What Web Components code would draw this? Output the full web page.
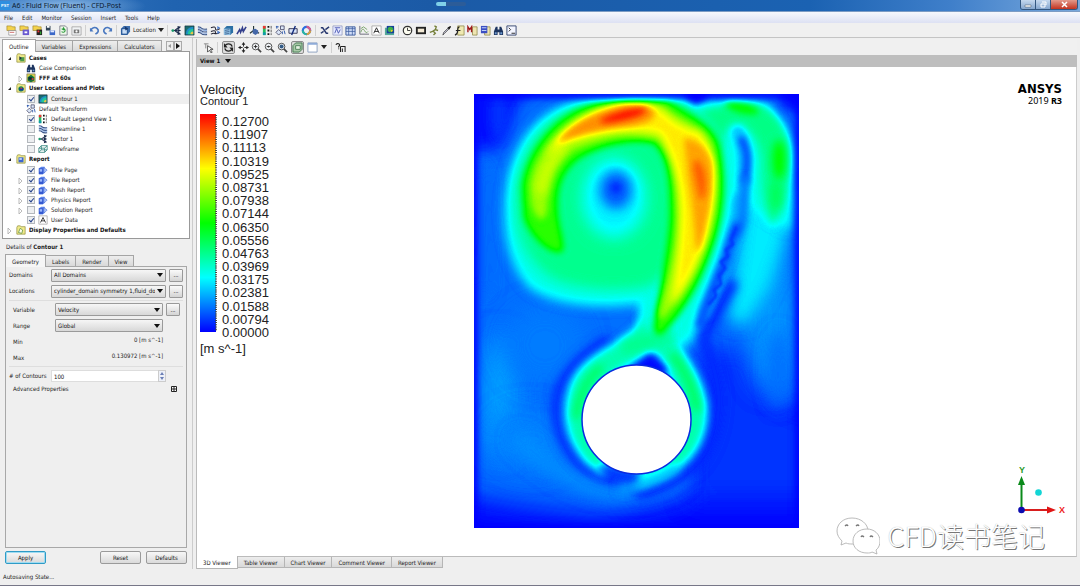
<!DOCTYPE html>
<html lang="en">
<head>
<meta charset="utf-8">
<title>A6 : Fluid Flow (Fluent) - CFD-Post</title>
<style>
html,body{height:100%;margin:0}
body{font:6px/10px "DejaVu Sans Condensed","Noto Sans",sans-serif;color:#222;background:#efefef;overflow:hidden}
</style>
</head>
<body>
<cfd-app></cfd-app>
<script>
const define = (name, html, setup) => customElements.define(name, class extends HTMLElement {
  constructor() {
    super();
    this.attachShadow({mode: 'open'}).innerHTML = '<style>*{box-sizing:border-box}:host{box-sizing:border-box}:host([hidden]){display:none}</style>' + html;
  }
  connectedCallback() { if (setup) setup(this, this.shadowRoot); }
});

/* 12 x 12 glyphs shared by the toolbars and the outline tree */
const folder = c => `<path d="M1 3V11H11V2H6L5 1H2Z" fill="#f1ea8a" stroke="#8b8a3a" stroke-width=".8"/>${c}`;
const pair = c => `<path d="M1 1h5l1 1h3v4H1z" fill="#f3d24d" stroke="#a0852a" stroke-width=".7"/>${c}`;
const waves = '<path d="M1 2q3 0 4 1.500t6 1M1 5q3 0 4 1.500t6 1M1 8q3 0 4 1.500t6 1" fill="none" stroke="#3a5488" stroke-width="1.300"/><path d="M1 3.500q3 0 4 1.500t6 1M1 6.500q3 0 4 1.500t6 1" fill="none" stroke="#6f9be0" stroke-width=".8"/>';
const binoc = '<path d="M3 2h2v3h2V2h2l2 5v4H7V8H5v3H1V7z" fill="#1d3560"/><path d="M2 8h2v2H2zM8 8h2v2H8z" fill="#6f9ad0"/>';
const vec = '<path d="M1 6h6M4 6l4-3M4 6l4 3" stroke="#1b2b4c" stroke-width="1.100" fill="none"/><path d="M7 1l4 1-3 3zM7 4l4 2-4 2zM8 7l3 3-4 1z" fill="#1b2b4c"/><circle cx="2" cy="6" r="1.500" fill="#1a9a6a"/>';
const page = '<path d="M1 4l3-2h4v7l-2 2H1z" fill="#5b83ea"/><path d="M1 4h5v7H1z" fill="#3358d0"/><path d="M2 5h3v3H2z" fill="#9db8fa"/><path d="M7 3l4 3-4 4z" fill="#aac3f7" stroke="#3358d0" stroke-width=".6"/>';
const mag = c => `<circle cx="5" cy="5" r="3.600" fill="#f6f9fc" stroke="#444" stroke-width="1"/><path d="M7.500 7.500L11 11" stroke="#444" stroke-width="1.800"/>${c}`;
const contour = '<path d="M1 1h10v10H1z" fill="#1c6a6c" stroke="#123" stroke-width=".6"/><path d="M2 10q0-7 8-8v8z" fill="#1f8fc8"/><path d="M4 10q0-5 6-6v6z" fill="#22c79a"/><path d="M7 10q0-3 3-3v3z" fill="#e9c545"/>';
const ICONS = {
  load: pair('<path d="M3 6h8v5H3z" fill="#fff" stroke="#777" stroke-width=".6"/><path d="M4 8h5" stroke="#c66"/>'),
  state: pair('<path d="M4 5h7v6H4z" fill="#6a5ad0"/><path d="M6 7h3v2H6z" fill="#fff"/>'),
  results: pair('<path d="M5 5h6v6H5z" fill="#222"/><path d="M6 6h2v2H6z" fill="#e33"/><path d="M9 7h1v3H9z" fill="#3c3"/>'),
  save: '<path d="M1 1h5v5H1z" fill="#345"/><path d="M2 1h3v2H2z" fill="#fff"/><path d="M5 6h6v5H5z" fill="#3b68c8"/><path d="M6 6h4v2H6z" fill="#dfe8ff"/>',
  refresh: '<path d="M2 1h6l2 2v8H2z" fill="#eef8ea" stroke="#667" stroke-width=".8"/><path d="M4 7a2 2 0 1 0 2-3M6 2.500V5L4 4" fill="none" stroke="#2b9a3b" stroke-width="1.200"/>',
  camera: '<path d="M1 2h10v9H1z" fill="#f1f3f5" stroke="#999" stroke-width=".8"/><path d="M3 5h6v4H3z" fill="#777"/><circle cx="6" cy="7" r="1.200" fill="#fff"/>',
  undo: '<path d="M2 5q4-4 7-1t-2 6" fill="none" stroke="#4a78c0" stroke-width="1.800"/><path d="M1 3l4 4H1z" fill="#4a78c0"/>',
  redo: '<path d="M10 5Q6 1 3 4t2 6" fill="none" stroke="#4a78c0" stroke-width="1.800"/><path d="M11 3L7 7h4z" fill="#4a78c0"/>',
  location: '<path d="M1 4l3-3h7v6l-3 4H1z" fill="#3f6fae"/><path d="M2 4h6v6H2z" fill="#c7dcf5" stroke="#174a8c" stroke-width="1"/><path d="M5 1l4 3-3 2z" fill="#17386e"/>',
  vector: vec, contour, waves,
  track: '<path d="M1 3q5-2 5 1t5 0M1 7q5-2 5 1t5 0M1 10q4-2 5 0" fill="none" stroke="#223" stroke-width="1.100"/><path d="M8 1l3 2-3 2zM8 6l3 2-3 2z" fill="#47c"/>',
  volume: '<path d="M1 4l3-3h7v7l-3 3H1z" fill="#2b6fa4"/><path d="M1 4h7v7H1z" fill="#8fbfe2"/><path d="M2 6l5-1M2 8l5-1M2 10l5-1" stroke="#3a5a88" stroke-width=".8"/>',
  text3d: '<path d="M1 10l3-5 1 3 2-5 1 4 3-5" fill="none" stroke="#333f8c" stroke-width="1.700"/>',
  instance: '<path d="M5 1v5L1 9M6 6l5 3" fill="none" stroke="#233" stroke-width="1.200"/><path d="M4 5l3-1 3 2v3l-3 2-3-2z" fill="#4467a8"/>',
  legend: '<path d="M1 1h3v10H1z" fill="#22c060"/><path d="M1 1h3v3H1z" fill="#e33"/><path d="M1 8h3v3H1z" fill="#19a"/><path d="M6 1h2v2H6zM6 5h2v2H6zM6 9h2v2H6z" fill="#111"/><path d="M10 1v3M10 5v3M10 9v2" stroke="#555"/>',
  transform: '<path d="M1 8l3-3 3 3-3 3z" fill="#dbe6f8" stroke="#335" stroke-width=".8"/><path d="M6 1h4v4H6z" fill="#dbe6f8" stroke="#335" stroke-width=".8"/><path d="M2 1v3M1 2h3M8 7v3M10 6l1 4" stroke="#2350a8"/>',
  clip: '<path d="M1 4h9v5H1z" fill="#d8e4fa" stroke="#224" stroke-width=".9"/><path d="M4 11L8 1" stroke="#112a7a" stroke-width="1.500"/>',
  wheel: '<circle cx="6" cy="6" r="4" fill="none" stroke="#2a6fe0" stroke-width="2.400"/><path d="M6 2a4 4 0 0 1 4 4" fill="none" stroke="#d65a8c" stroke-width="2.400"/><path d="M10 6a4 4 0 0 1-4 4" fill="none" stroke="#d9a03a" stroke-width="2.400"/><path d="M6 10a4 4 0 0 1-4-4" fill="none" stroke="#28b8a0" stroke-width="2.400"/>',
  vars: '<path d="M2 3h2l4 6h2M2 9l3-2M7 5l4-3" fill="none" stroke="#2a3a70" stroke-width="1.600"/>',
  expr: '<path d="M1 1h10v10H1z" fill="#e8ecff" stroke="#8d96bd" stroke-width=".8"/><path d="M3 3h6M3 9l2-5 2 5 2-4" fill="none" stroke="#4a56b4"/>',
  table: '<path d="M1 2h10v9H1z" fill="#cfdcf8" stroke="#3a5a9c"/><path d="M1 4h10M1 7h10M4 2v9M8 2v9" stroke="#3a5a9c" stroke-width=".8"/>',
  chart: '<path d="M2 1v9h10" fill="none" stroke="#667"/><path d="M3 8q2-6 4-2t4 1M3 4l3-2 4 3" fill="none" stroke="#6a9a5a" stroke-width=".9"/>',
  letter: '<path d="M1 1h10v10H1z" fill="#fff" stroke="#999" stroke-width=".8"/><path d="M3 9l3-6 3 6M4 7h4" fill="none" stroke="#222"/>',
  figure: '<path d="M1 3h10v8H1z" fill="#5a9"/><path d="M3 1h8v8H3z" fill="#16419a"/><circle cx="7" cy="5" r="3" fill="#3cb04a"/><path d="M7 5l3 1-2 2z" fill="#e8c62d"/>',
  clock: '<circle cx="6" cy="6" r="4.600" fill="#fdfdf0" stroke="#333" stroke-width="1.300"/><path d="M6 3v3h3" fill="none" stroke="#333"/>',
  film: '<path d="M1 2h11v8H1z" fill="#222"/><path d="M3 4h7v4H3z" fill="#f3ead6"/>',
  walk: '<path d="M7 1l2 1-1 3 3 1M8 5l-3 2-3 1M6 7l2 2-2 2" fill="none" stroke="#76803b" stroke-width="1.500"/>',
  probe: '<path d="M2 11l1-3 5-5 1 1-5 5z" fill="#ccd" stroke="#222" stroke-width=".7"/><path d="M7 3l3-2 1 1-2 3z" fill="#111"/>',
  fx: '<path d="M4 1h7v10H4z" fill="#efe9b2" stroke="#8a8443" stroke-width=".8"/><path d="M6 2Q4 2 4 6t-3 5M2 6h5" fill="none" stroke="#222" stroke-width="1.300"/>',
  macro: '<path d="M6 2h5v9H6z" fill="#efe5b2" stroke="#8a8443" stroke-width=".8"/><path d="M1 8V2l2 3 2-3v6" fill="none" stroke="#a11a1a" stroke-width="1.500"/>',
  mesh: '<path d="M5 2h6v9H5z" fill="#efe5b2" stroke="#8a8443" stroke-width=".8"/><path d="M1 1h7v8H1z" fill="#3b4ec2"/><path d="M2 3h5M2 6h5" stroke="#cdf"/>',
  compare: binoc,
  cmd: '<path d="M1 1h10v10H1z" fill="#f3f5ff" stroke="#33436f" stroke-width="1"/><path d="M3 3l2 2-2 2M6 9h4" fill="none" stroke="#222"/>',
  pick: '<path d="M1 2h5M3 2v5" stroke="#888" fill="none"/><path d="M5 4v7l2-2 2 3 1-1-2-3h3z" fill="#fff" stroke="#222" stroke-width=".8"/>',
  rotate: '<path d="M2 5q1-3 4-3t4 3M10 7q-1 3-4 3T2 7" fill="none" stroke="#222" stroke-width="1.400"/><path d="M1 1v5h4zM11 11V6H7z" fill="#222"/>',
  pan: '<path d="M6 2v8M2 6h8" stroke="#222" stroke-dasharray="3 2 3"/><path d="M6 0l2 3H4zM6 12l2-3H4zM0 6l3-2v4zM12 6L9 4v4z" fill="#222"/>',
  zoom: mag('<path d="M3 5h4M5 3v4" stroke="#222"/>'),
  zoombox: mag('<path d="M3 5h4M5 4v2" stroke="#222"/>'),
  fit: mag('<circle cx="5" cy="5" r="2.200" fill="#345c86"/>'),
  hilite: '<path d="M1 4l3-3h7v7l-3 3H1z" fill="#a9c9a8" stroke="#2d6b3d" stroke-width=".9"/><path d="M4 4h5v4H4z" fill="#e6f2e2" stroke="#2d6b3d" stroke-width=".8"/>',
  view: '<path d="M1 1h10v10H1z" fill="#fff" stroke="#8ba0c0"/><path d="M1 1h10v2H1z" fill="#8eabd8"/>',
  what: '<path d="M1 3q1-2 3-1t0 3v1M4 7v1" fill="none" stroke="#222" stroke-width="1.300"/><path d="M6 5h5v6M6 5v6M8 7v4" stroke="#222" stroke-width="1.100" fill="none"/>',
  cases: folder('<path d="M5 5h5v5H5z" fill="#4a9a4a"/><path d="M4 4l3 2-3 3z" fill="#234"/>'),
  plots: folder('<circle cx="6" cy="7" r="3.200" fill="#1d8a50"/><path d="M4 6h5v3H4z" fill="#123c9c"/><path d="M6 5l2 2H5z" fill="#e33"/>'),
  report: folder('<path d="M3 4h6v6H3z" fill="#3c66d0"/><path d="M4 5h3v2H4z" fill="#cfe0ff"/>'),
  display: folder('<path d="M5 4l3 2-1 4-4-1z" fill="#fffdf0" stroke="#5a8f3a" stroke-width=".9"/>'),
  mesh3: '<path d="M1 1h10v10H1z" fill="#d9cf4e" stroke="#555" stroke-width=".6"/><path d="M2 5l4-3 4 3v4l-4 2-4-2z" fill="#12743c"/><path d="M3 5h4v3H3z" fill="#123"/><path d="M7 6l3 1-3 2z" fill="#d33"/>',
  wire: '<path d="M1 5l3-3h7v5l-3 3H1zM1 5h7v5M8 5l3-3M4 2v5h7M4 7l-3 3" fill="none" stroke="#1f7a72" stroke-width=".9"/>',
  page
};
define('cfd-icon', '<style>:host{display:block;flex:none;width:11px;height:11px}svg{display:block;width:100%;height:100%}</style><svg viewBox="0 0 12 12" aria-hidden="true"></svg>',
  (el, r) => { r.querySelector('svg').innerHTML = ICONS[el.getAttribute('name')] || ''; });

define('cfd-titlebar', `<style>
:host{display:flex;height:12px;align-items:flex-start;background:radial-gradient(ellipse 80px 14px at 66px 6px,#8db9e6,#8db9e600),linear-gradient(90deg,#3a7cc4,#2063b0 16%,#1b5aa6 40%,#1b62b2 75%,#3f7fca 88%,#79a9dd);border-bottom:1px solid #7d9cc4}
.app{width:10px;height:9px;margin-top:1px;background:#2f8fe0;color:#fff;font:bold 4px/9px "Liberation Sans",sans-serif;text-align:center}
h1{margin:0 0 0 2px;font:7px/12px "Noto Sans",sans-serif;color:#0b1a30;flex:1;white-space:nowrap}
.pill{width:30px;height:4px;margin:2px 554px 0 0;border-radius:2px;background:linear-gradient(90deg,#7fd0e8 10px,#2c5c98 10px)}
.win{display:flex;margin-right:2px;border:1px solid #33567f;border-top:0;border-radius:0 0 3px 3px;overflow:hidden}
button{border:0;border-right:1px solid #33567f;padding:0;width:15px;height:9px;background:linear-gradient(#c5d8ee,#86a7cf);display:grid;place-items:center}
button:last-child{width:26px;border:0;background:linear-gradient(#e39a8c,#c3331f)}
svg{width:9px;height:7px;display:block}
</style><span class="app">PST</span><h1>A6 : Fluid Flow (Fluent) - CFD-Post</h1><span class="pill"></span>
<div class="win"><button aria-label="Minimize"><svg viewBox="0 0 9 7"><path d="M1 4h6v2H1z" fill="#fff" stroke="#456" stroke-width=".5"/></svg></button><button aria-label="Restore"><svg viewBox="0 0 9 7"><path d="M3 1h4v3M2 3h4v3H2z" fill="none" stroke="#fff"/></svg></button><button aria-label="Close"><svg viewBox="0 0 9 7"><path d="M2 1l5 5M7 1L2 6" stroke="#fff" stroke-width="1.500"/></svg></button></div>`);

define('cfd-menubar', `<style>
:host{display:flex;height:11px;padding-left:4px;gap:9px;align-items:center;background:linear-gradient(#f6f8fd,#dde1f3)}
button{border:0;background:none;padding:0;font:inherit;color:#222}
</style><button>File</button><button>Edit</button><button>Monitor</button><button>Session</button><button>Insert</button><button>Tools</button><button>Help</button>`);

const tool = n => {
  if (n === '|') return '<i></i>';
  if (n === 'v') return '<b></b>';
  if (n === 'Location') return '<button class="loc"><cfd-icon name="location"></cfd-icon>Location<b></b></button>';
  const name = n.replace('+', '');
  return `<button class="${n[0] === '+' ? 'on' : ''}" aria-label="${name}"><cfd-icon name="${name}"></cfd-icon></button>`;
};
define('cfd-toolbar', `<style>
:host{display:flex;background:#f0f0f0}
div{display:flex;align-items:center}
button{border:0;background:none;padding:0 1px;font:inherit;color:#222;display:flex;align-items:center}
.on{border:1px solid #8b8b8b;border-radius:2px;background:#dcdcdc;margin:0 2px;padding:0}
.loc{gap:2px}
b{border:3px solid transparent;border-top:4px solid #222;border-bottom:0;margin:0 2px}
.loc b{margin:0}
i{width:1px;height:11px;background:#d0d0d0;margin:0 2px}
</style><div role="toolbar"></div>`, (el, r) => { r.querySelector('div').innerHTML = el.getAttribute('items').split(' ').map(tool).join(''); });

define('cfd-tabs', `<style>
:host{display:flex;align-items:flex-end;position:relative;z-index:1}
button{border:1px solid #a5a5a5;border-bottom:0;border-left-width:0;padding:0 6px;height:11px;font:inherit;line-height:9px;color:#222;background:linear-gradient(#ededed,#d9d9d9);white-space:nowrap}
button.sel{background:var(--sel,#fff);border-left-width:1px;height:13px;margin-bottom:-1px}
:host([bottom]){align-items:flex-start}
:host([bottom]) button{border:1px solid #b5b5b5;border-width:0 1px 1px 0}
:host([bottom]) button.sel{margin:-1px 0 0}
</style><div style="display:contents" role="tablist"></div><slot></slot>`, (el, r) => {
  r.querySelector('div').innerHTML = el.getAttribute('items').split(',').map((t, i) => `<button role="tab" class="${i ? '' : 'sel'}">${t}</button>`).join('');
});

define('cfd-node', `<style>
:host{display:block}
.row{display:flex;align-items:center;height:10px;gap:2px;white-space:nowrap;padding-left:3px}
:host([level="2"]) .row{padding-left:14px}
:host([head]) .row{font-weight:bold;gap:3px;color:#111}
:host([strong]) .row{font-weight:bold}
:host([selected]) .row{background:linear-gradient(90deg,transparent 24px,#efefef 24px)}
svg{width:7px;height:7px;flex:none}
label{display:flex;align-items:center;gap:3px}
cfd-icon{width:10px;height:10px}
input{appearance:none;margin:0 0 0 1px;width:8px;height:8px;border:1px solid #b4b8bd;background:#eceef0;flex:none;display:grid;place-items:center}
input:checked::after{content:"";width:2px;height:4px;margin-top:-1px;border:solid #24418c;border-width:0 1px 1px 0;transform:rotate(40deg)}
.kids{padding-top:1px}
:host([icon="cases"]) .kids{padding-top:0}
</style><div class="row"><svg viewBox="0 0 7 7"></svg><label></label></div><div class="kids"><slot></slot></div>`, (el, r) => {
  const get = n => el.getAttribute(n);
  r.querySelector('svg').innerHTML = get('tw') === 'open' ? '<path d="M5 2v3H2z" fill="#222"/>' : get('tw') === 'closed' ? '<path d="M2 1l3 3-3 3z" fill="#fff" stroke="#aaa" stroke-width=".8"/>' : '';
  const box = el.hasAttribute('check') ? `<input type="checkbox" ${get('check') === 'on' ? 'checked' : ''}>` : '';
  r.querySelector('label').innerHTML = `${box}<cfd-icon name="${get('icon')}"></cfd-icon><span>${get('text')}</span>`;
  if (!el.hasAttribute('head')) r.querySelector('.kids').remove();
});

define('cfd-outline', `<style>
:host{display:block}
.tree{background:#fff;border:1px solid #999;padding:1px 0 2px;margin:0 2px 0 2px}
.arrows{display:flex;margin-left:4px}
.arrows button{width:8px;height:10px;border:1px solid #aaa;background:#eee;padding:0;display:grid;place-items:center}
.arrows svg{width:5px;height:6px}
cfd-tabs{margin-left:2px}
</style>
<cfd-tabs items="Outline,Variables,Expressions,Calculators"><span class="arrows"><button aria-label="Scroll left"><svg viewBox="0 0 5 6"><path d="M4 1L1 3l3 2z" fill="#999"/></svg></button><button aria-label="Scroll right"><svg viewBox="0 0 5 6"><path d="M1 0l4 3-4 3z" fill="#111"/></svg></button></span></cfd-tabs>
<div class="tree">
<cfd-node head tw="open" icon="cases" text="Cases"><cfd-node level="2" icon="compare" text="Case Comparison"></cfd-node><cfd-node level="2" strong tw="closed" icon="mesh3" text="FFF at 60s"></cfd-node></cfd-node>
<cfd-node head tw="open" icon="plots" text="User Locations and Plots"><cfd-node level="2" selected check="on" icon="contour" text="Contour 1"></cfd-node><cfd-node level="2" icon="transform" text="Default Transform"></cfd-node><cfd-node level="2" check="on" icon="legend" text="Default Legend View 1"></cfd-node><cfd-node level="2" check="off" icon="waves" text="Streamline 1"></cfd-node><cfd-node level="2" check="off" icon="vector" text="Vector 1"></cfd-node><cfd-node level="2" check="off" icon="wire" text="Wireframe"></cfd-node></cfd-node>
<cfd-node head tw="open" icon="report" text="Report"><cfd-node level="2" check="on" icon="page" text="Title Page"></cfd-node><cfd-node level="2" tw="closed" check="on" icon="page" text="File Report"></cfd-node><cfd-node level="2" tw="closed" check="on" icon="page" text="Mesh Report"></cfd-node><cfd-node level="2" tw="closed" check="on" icon="page" text="Physics Report"></cfd-node><cfd-node level="2" tw="closed" check="off" icon="page" text="Solution Report"></cfd-node><cfd-node level="2" check="on" icon="letter" text="User Data"></cfd-node></cfd-node>
<cfd-node head tw="closed" icon="display" text="Display Properties and Defaults"></cfd-node>
</div>`);

define('cfd-combo', `<style>
:host{display:grid;min-width:0;align-items:center}
select{grid-area:1/1;appearance:none;width:100%;height:13px;margin:0;border:1px solid #9a9a9a;border-radius:1px;background:linear-gradient(#f6f6f6,#d8d8d8);font:inherit;color:#111;padding:0 10px 0 2px}
b{grid-area:1/1;justify-self:end;margin-right:3px;border:3px solid transparent;border-top:4px solid #111;border-bottom:0;pointer-events:none}
</style><select><option></option></select><b></b>`, (el, r) => {
  r.querySelector('option').textContent = el.getAttribute('value');
  r.querySelector('select').setAttribute('aria-label', el.getAttribute('label'));
});

define('cfd-details', `<style>
:host{display:flex;flex-direction:column;flex:1;min-height:0;padding:3px 5px 5px}
h2{margin:0 0 2px 1px;font:inherit;line-height:10px}
.box{flex:1;border:1px solid #a8a8a8;padding:0 3px}
.line{display:grid;grid-template-columns:39px 1fr 14px;column-gap:3px;align-items:center;height:16px}
.line label,.line span{white-space:nowrap}
.in{padding:0 3px 0 4px}
.in .line{height:15px;margin-bottom:1px}
hr{border:0;border-top:1px solid #dedede;margin:1px 0}
.more{border:1px solid #999;border-radius:1px;background:linear-gradient(#fafafa,#d4d4d4);height:13px;padding:0;font:inherit;line-height:10px}
.ro{text-align:right;margin-top:-4px}
.num{display:flex;grid-column:2}
input{min-width:0;width:100%;height:12px;border:1px solid #ddd;border-right:0;padding:0 2px;font:inherit;color:#111;background:#fff}
.spin{width:8px;border:1px solid #ccc;background:#edf0f8;display:grid;place-items:center}
.spin svg{width:6px;height:10px}
.adv{display:flex;justify-content:space-between;padding:0 6px 0 4px;border:0;background:none;width:100%;font:inherit;color:#222;align-items:center}
.adv svg{width:6px;height:6px}
.acts{display:flex;gap:5px;margin-top:3px}
.acts button{width:41px;height:13px;border:1px solid #9a9a9a;border-radius:2px;background:linear-gradient(#f7f7f7,#dadada);font:inherit;padding:0;color:#111}
.acts .go{border-color:#2f9bc6;box-shadow:inset 0 0 0 1px #9fdcf2;margin-right:auto}
</style>
<h2>Details of <b>Contour 1</b></h2>
<cfd-tabs style="--sel:#f6f6f6" items="Geometry,Labels,Render,View"></cfd-tabs>
<div class="box">
<div class="line"><span>Domains</span><cfd-combo label="Domains" value="All Domains"></cfd-combo><button class="more">...</button></div>
<div class="line"><span>Locations</span><cfd-combo label="Locations" value="cylinder_domain symmetry 1,fluid_domain"></cfd-combo><button class="more">...</button></div>
<hr>
<div class="in">
<div class="line"><span>Variable</span><cfd-combo label="Variable" value="Velocity"></cfd-combo><button class="more">...</button></div>
<div class="line"><span>Range</span><cfd-combo label="Range" value="Global"></cfd-combo></div>
<div class="line"><span>Min</span><span class="ro">0 [m s^-1]</span></div>
<div class="line"><span>Max</span><span class="ro">0.130972 [m s^-1]</span></div>
</div>
<hr>
<div class="line"><label for="n"># of Contours</label><span class="num"><input id="n" value="100"><span class="spin"><svg viewBox="0 0 6 10"><path d="M1 4l2-3 2 3zM1 6l2 3 2-3z" fill="#6b7fb5"/></svg></span></span></div>
<button class="adv">Advanced Properties<svg viewBox="0 0 6 6"><path d="M.500.500h5v5h-5z" fill="#fff" stroke="#222"/><path d="M1 3h4M3 1v4" stroke="#222"/></svg></button>
</div>
<div class="acts"><button class="go">Apply</button><button>Reset</button><button>Defaults</button></div>`);

define('cfd-legend', `<style>
:host{display:block;font:13px/13px "Liberation Sans",sans-serif;color:#222}
.s{font-size:11px;line-height:11px}
.scale{display:flex;margin:7px 0 3px;gap:5px}
svg{width:17px;height:218px;display:block;flex:none}
ol{list-style:none;margin:1px 0 0;padding:0;height:224px;display:flex;flex-direction:column;justify-content:space-between}
li{height:13px}
</style><div>Velocity</div><div class="s">Contour 1</div>
<div class="scale"><svg viewBox="0 0 17 218"><defs><linearGradient id="g" x1="0" y1="0" x2="0" y2="1"><stop offset="0" stop-color="#f00"/><stop offset=".25" stop-color="#ff0"/><stop offset=".5" stop-color="#0f0"/><stop offset=".75" stop-color="#0ff"/><stop offset="1" stop-color="#00f"/></linearGradient></defs><path d="M0 0h16v218H0z" fill="url(#g)"/><path d="M16 1v216" stroke="#444" stroke-width="2" stroke-dasharray="1 1.180"/></svg><ol></ol></div><div>[m s^-1]</div>`, (el, r) => {
  r.querySelector('ol').innerHTML = '0.12700 0.11907 0.11113 0.10319 0.09525 0.08731 0.07938 0.07144 0.06350 0.05556 0.04763 0.03969 0.03175 0.02381 0.01588 0.00794 0.00000'.split(' ').map(v => `<li>${v}</li>`).join('');
});

/* Speed is painted as grey level (0 = still, 100 = fastest), then a transfer table turns it into the rainbow scale. */
const v = n => `hsl(0 0% ${n}%)`;
const shape = (d, n, blur) => `<path d="${d}" fill="${v(n)}" filter="url(#b${blur})"/>`;
const line = (d, n, w, blur) => `<path d="${d}" fill="none" stroke="${v(n)}" stroke-width="${w}" stroke-linecap="round" stroke-linejoin="round" filter="url(#b${blur})"/>`;
const blob = (x, y, rx, ry, n, blur, rot = 0) => `<ellipse cx="${x}" cy="${y}" rx="${rx}" ry="${ry}" transform="rotate(${rot} ${x} ${y})" fill="${v(n)}" filter="url(#b${blur})"/>`;
const FIELD = [
  '<path d="M440 60h400v500H440z" fill="' + v(11) + '"/>',
  shape('M440 490L520 505L600 515L680 500L720 460L740 420L840 400V580H440Z', 1, 12),
  shape('M690 350L755 345L770 400L840 430V500H690Z', 5, 12),
  blob(500, 395, 18, 60, 16, 12), blob(545, 345, 40, 40, 12, 12), blob(530, 440, 40, 30, 13, 12),
  line('M520 440Q565 485 620 492Q650 492 680 476', 14, 18, 8),
  blob(770, 320, 24, 70, 15, 12), blob(778, 370, 10, 40, 11, 8),
  shape('M746 190L796 190L784 245L768 290L745 325L728 320Z', 23, 8),
  shape('M440 60H560L520 100L500 150H440Z', 2, 8), blob(499, 115, 8, 24, 5, 5),
  line('M480 170L484 290', 10, 12, 8),
  shape('M600 100C550 102 518 130 508 180C500 225 508 265 530 288C560 308 610 308 640 303L648 345L690 345L720 280L740 200L790 230L793 150L767 104L700 100Z', 28, 6),
  shape('M600 102C560 104 528 130 517 180C511 225 524 262 556 280C590 292 630 290 650 286L700 250L720 130L680 100Z', 36, 6),
  shape('M700 112Q730 100 755 103Q790 115 791 160Q790 200 772 226Q760 200 762 160Q758 128 735 124Q714 130 726 180L715 130Z', 37, 4),
  blob(742, 108, 17, 5, 51, 3, 14), blob(779, 160, 6, 20, 52, 4), blob(776, 195, 5, 16, 42, 4),
  shape('M680 88H714L704 101L696 105L689 101Z', 1, 3), blob(797, 96, 18, 16, 1, 5),
  line('M606 340Q570 362 558 390Q548 430 578 462Q600 482 630 482', 3, 8, 5),
  line('M732 285Q710 320 704 340Q718 375 719 400Q718 440 697 465Q665 490 640 494', 4, 11, 5),
  line('M656 315L656 336', 28, 30, 5),
  shape('M642 318C626 346 588 350 573 380C562 405 564 436 586 462L604 476L606 440L592 400L612 375L640 358L660 345Z', 33, 4),
  shape('M670 322C676 350 702 368 707 405C709 440 692 464 662 478L636 488L640 474L668 450L680 400L670 375L652 345Z', 33, 4),
  line('M675 468Q655 482 622 488', 17, 8, 5),
  line('M600 368Q580 386 576 416', 43, 6, 4),
  line('M674 356Q692 380 697 408', 44, 6, 4),
  line('M628 347L662 337', 36, 14, 5),
  shape('M632 368L642 360L650 354L658 360L668 370L650 380Z', 1, 3),
  line('M600 468Q618 477 636 478', 4, 4, 3),
  blob(614, 198, 32, 40, 24, 8), blob(616, 190, 16, 19, 9, 6), blob(616, 188, 5, 5, 3, 3),
  shape('M522 188C524 158 550 116 590 105C620 98 650 98 668 100C690 116 712 122 720 146C728 180 724 215 714 245C700 285 685 310 666 330C660 338 652 336 654 322C660 290 668 250 670 215C670 180 668 158 654 144C630 139 600 146 580 158C560 172 556 192 558 215C560 232 566 246 562 252C550 256 530 236 524 218Z', 54, 3),
  shape('M530 185C534 155 560 120 600 108C630 102 650 102 664 106C680 120 704 126 712 145C720 180 718 215 706 245C694 280 680 300 664 318C658 322 658 312 662 300C670 270 678 240 677 210C677 175 672 155 658 140C630 132 600 138 572 152C552 166 549 190 547 212C542 228 534 214 531 204Z', 65, 3),
  line('M541 190Q545 165 562 148', 71, 9, 5),
  shape('M546 155C560 128 590 110 625 104Q650 102 664 112Q676 126 700 132Q714 150 714 180Q712 225 700 255Q688 285 670 306Q682 245 680 205Q678 165 660 134Q630 126 590 136Q562 142 546 155Z', 77, 4),
  shape('M557 143C570 124 596 110 625 105Q655 104 655 114Q652 124 625 127Q590 130 557 143Z', 86, 3),
  shape('M684 138Q704 140 712 162Q715 192 706 226Q701 252 696 252Q693 205 688 180Z', 84, 3),
  shape('M600 120Q622 108 644 108Q650 111 638 116Q620 122 602 123Z', 99, 3),
  shape('M696 158Q705 165 706 182Q706 200 700 200Q696 180 693 168Z', 91, 3),
  line('M738 132Q746 148 743 190L740 205', 20, 14, 3),
  line('M740 200Q738 225 730 246L716 285L704 312', 18, 12, 3),
  line('M742 140Q748 152 747 164L745 180', 7, 8, 3),
  line('M745 180L744 196L742 222L736 234', 12, 8, 3),
  line('M737 226L730 244L726 260L720 272L712 292L700 324', 8, 9, 3),
  line('M736 228L731 240L733 244L726 250L728 256L721 262L725 268L719 276L721 284L714 290L716 296L709 304', 6, 3, 1),
  '<path d="M474 94.500H799V528H474Z" fill="none" stroke="' + v(0) + '" stroke-width="8" filter="url(#b3)"/>'
].join('');
define('cfd-contour', `<style>:host{display:block;aspect-ratio:325/434}svg{display:block;width:100%;height:100%}</style>
<svg viewBox="474 94 325 434" role="img" aria-label="Velocity contour"><defs>
${[1, 3, 4, 5, 6, 8, 12].map(b => `<filter id="b${b}" filterUnits="userSpaceOnUse" x="400" y="20" width="480" height="580" color-interpolation-filters="sRGB"><feGaussianBlur stdDeviation="${b}"/></filter>`).join('')}
<filter id="jet" filterUnits="userSpaceOnUse" x="474" y="94" width="325" height="434" color-interpolation-filters="sRGB"><feComponentTransfer><feFuncR type="table" tableValues="0 0 0 1 1"/><feFuncG type="table" tableValues="0 1 1 1 0"/><feFuncB type="table" tableValues="1 1 0 0 0"/></feComponentTransfer></filter></defs>
<g filter="url(#jet)">${FIELD}</g>
<circle cx="636.500" cy="419.500" r="54.500" fill="#fff" stroke="#0a2ae0" stroke-width="1.500"/></svg>`);

define('cfd-triad', `<style>:host{display:block;width:56px;height:56px}svg{display:block;width:100%;height:100%}text{font:bold 9px "Liberation Sans",sans-serif}</style>
<svg viewBox="1014 463 56 56"><path d="M1021.500 510V484" stroke="#0a8a1a" stroke-width="2"/><path d="M1021.500 476l3.500 9h-7z" fill="#0a8a1a"/><path d="M1022 510h26" stroke="#d81e1e" stroke-width="2"/><path d="M1056 510l-9-3.500v7z" fill="#e01515"/><circle cx="1021.500" cy="510" r="3.300" fill="#0b0bb0"/><circle cx="1038.500" cy="492.500" r="3.300" fill="#12d5d5"/><text x="1019" y="473" fill="#2a9a2a">Y</text><text x="1059" y="513" fill="#e22">X</text></svg>`);

define('cfd-watermark', `<style>
:host{display:flex;align-items:center;gap:8px;font:27px/36px "Noto Sans CJK SC",sans-serif;font-weight:300;color:#fff;text-shadow:1px 1px 0 #777,0 0 1px #aaa}
svg{width:44px;height:38px;display:block}
</style><svg viewBox="0 0 44 38"><g fill="#fff" stroke="#aaa" stroke-width=".8"><path d="M16 1C7 1 1 7 1 14c0 4 2 7 5 10l-1 4 5-2c2 1 4 1 7 1 8 0 15-6 15-13S25 1 16 1Z"/><path d="M31 12c-8 0-14 5-14 12s6 12 14 12c2 0 4 0 5-1l5 2-1-4c3-2 4-6 4-9 0-7-6-12-13-12Z"/></g><path d="M9 9q2-2 3 0M20 9q2-2 3 0M25 20q1-2 3 0M34 20q1-2 3 0" fill="none" stroke="#777" stroke-width="1.300"/></svg><span>CFD读书笔记</span>`);

define('cfd-viewport', `<style>
:host{display:grid;flex:1;min-height:0;background:#fff;border-right:1px solid #ccc;border-bottom:1px solid #bbb;grid-template:minmax(0,1fr)/minmax(0,1fr)}
:host>*{grid-area:1/1}
cfd-legend{place-self:start;margin:16px 0 0 3px}
cfd-contour{justify-self:center;margin:27px 0 28px}
.logo{place-self:start end;margin:14px 14px 0 0;text-align:right;color:#000;font:9px/10px "Noto Sans",sans-serif}
.logo strong{display:block;font:bold 13px/15px "DejaVu Sans Condensed","Noto Sans",sans-serif}
cfd-triad{place-self:end;margin:0 6px 37px 0}
cfd-watermark{place-self:end;margin:0 31px 1px 0}
</style><cfd-contour></cfd-contour><cfd-legend></cfd-legend><div class="logo"><strong>ANSYS</strong>2019 <b>R3</b></div><cfd-triad></cfd-triad><cfd-watermark></cfd-watermark>`);

define('cfd-app', `<style>
:host{display:flex;flex-direction:column;height:100vh;border-bottom:1px solid #778}
.main-tools{height:15px;padding-left:5px;border-bottom:1px solid #c4c4c4}
.body{flex:1;display:flex;min-height:0}
.side{width:193px;flex:none;display:flex;flex-direction:column;padding-top:1px;border-right:1px solid #ccc}
.work{flex:1;min-width:0;display:flex;flex-direction:column;margin:1px 3px 0 3px;border-left:1px solid #bbb}
.view-tools{height:16px;padding-left:5px}
.view{height:12px;background:#bebebe;font-weight:bold;line-height:12px;padding-left:3px;display:flex;align-items:center;gap:5px;color:#111}
.view b{border:3px solid transparent;border-top:4px solid #111;border-bottom:0}
footer{height:16px;line-height:16px;padding-left:3px}
</style>
<cfd-titlebar></cfd-titlebar><cfd-menubar></cfd-menubar>
<cfd-toolbar class="main-tools" items="load state results save refresh camera | undo redo | Location | vector contour waves track volume text3d instance legend transform clip wheel | vars expr table chart letter figure | clock film walk probe fx macro mesh compare cmd"></cfd-toolbar>
<div class="body"><div class="side"><cfd-outline></cfd-outline><cfd-details></cfd-details></div>
<div class="work"><cfd-toolbar class="view-tools" items="pick | +rotate pan zoom zoombox fit +hilite view v | what"></cfd-toolbar><div class="view">View 1<b></b></div><cfd-viewport></cfd-viewport><cfd-tabs bottom items="3D Viewer,Table Viewer,Chart Viewer,Comment Viewer,Report Viewer"></cfd-tabs></div></div>
<footer>Autosaving State...</footer>`);
</script>
</body>
</html>
